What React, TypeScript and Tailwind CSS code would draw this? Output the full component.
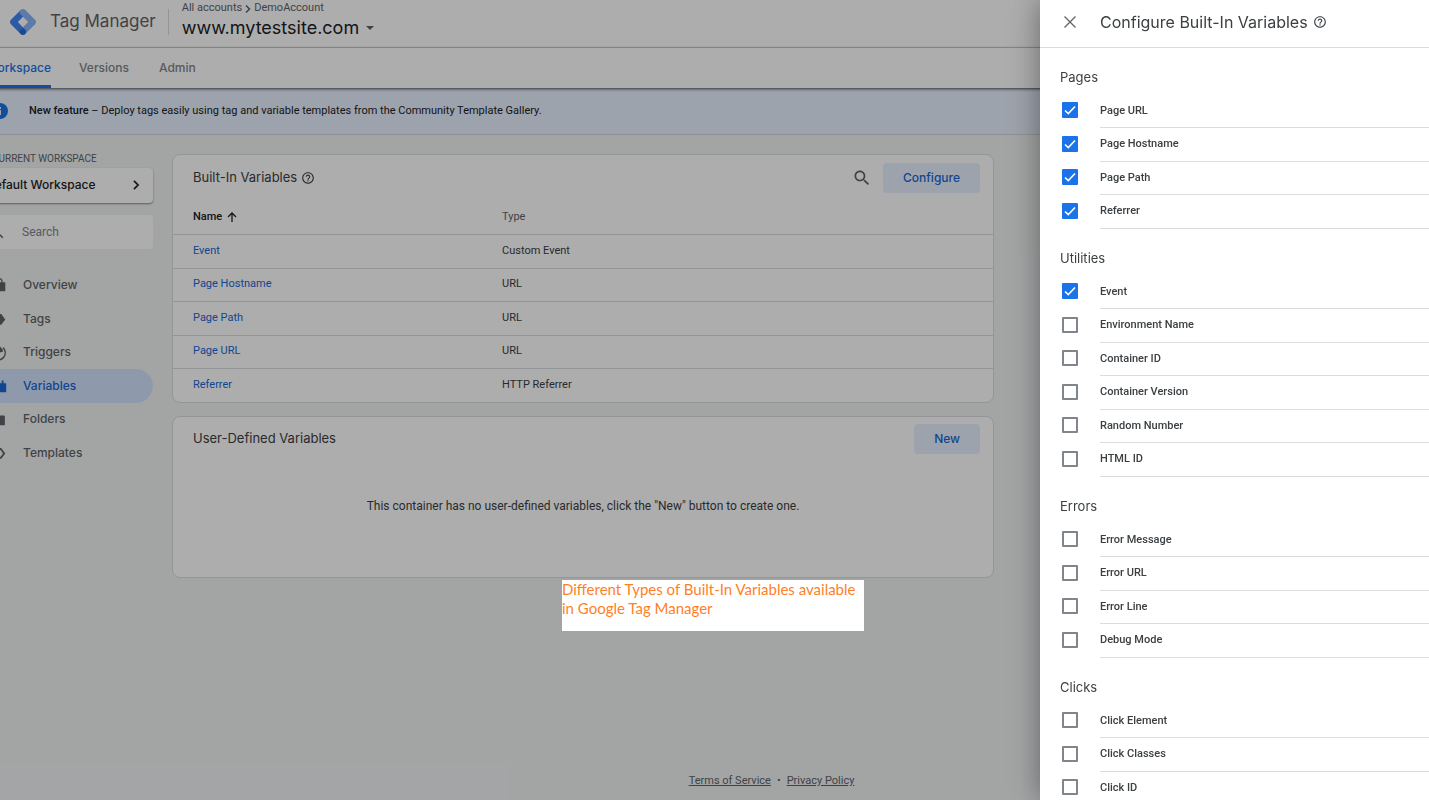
import React from "react";

const SANS = "font-['Inter','Roboto',sans-serif]";

function HelpIcon({ className }: { className?: string }) {
  return (
    <svg viewBox="0 0 24 24" className={className} fill="currentColor" aria-hidden="true">
      <path d="M11 18h2v-2h-2v2zm1-16C6.480 2 2 6.480 2 12s4.480 10 10 10 10-4.480 10-10S17.520 2 12 2zm0 18c-4.410 0-8-3.590-8-8s3.590-8 8-8 8 3.590 8 8-3.590 8-8 8zm0-14c-2.210 0-4 1.790-4 4h2c0-1.100.900-2 2-2s2 .900 2 2c0 2-3 1.750-3 5h2c0-2.250 3-2.500 3-5 0-2.210-1.790-4-4-4z" />
    </svg>
  );
}

function SearchIcon({ className }: { className?: string }) {
  return (
    <svg viewBox="0 0 24 24" className={className} fill="currentColor" aria-hidden="true">
      <path d="M15.500 14h-.790l-.280-.270C15.410 12.590 16 11.110 16 9.500 16 5.910 13.090 3 9.500 3S3 5.910 3 9.500 5.910 16 9.500 16c1.610 0 3.090-.590 4.230-1.570l.270.280v.790l5 4.990L20.490 19l-4.990-5zm-6 0C7.010 14 5 11.990 5 9.500S7.010 5 9.500 5 14 7.010 14 9.500 11.990 14 9.500 14z" />
    </svg>
  );
}

function Logo() {
  return (
    <svg viewBox="0 0 256 256" className="size-[26px] shrink-0" aria-hidden="true">
      <path fill="#8ab4f8" d="M150.262 245.516l-44.437-43.331 95.433-97.454 46.007 45.091z" />
      <path fill="#4285f4" d="M150.450 53.938L106.176 8.731 9.360 104.629c-12.480 12.480-12.480 32.713 0 45.207l95.360 95.986 45.090-42.182-72.654-76.407z" />
      <path fill="#8ab4f8" d="M246.625 105.370L150.625 9.370c-12.494-12.494-32.750-12.494-45.244 0-12.494 12.495-12.494 32.751 0 45.245l96 96c12.494 12.494 32.750 12.494 45.244 0 12.494-12.494 12.494-32.750 0-45.244z" />
      <circle fill="#246fdb" cx="127.265" cy="224.731" r="31.273" />
    </svg>
  );
}

const navItems = [
  { label: "Overview", icon: <path d="M3 7h14v10H3zM6 7V6a4 4 0 0 1 8 0v1h-1.500V6a2.500 2.500 0 0 0-5 0v1z" /> },
  { label: "Tags", icon: <path d="M2 4.500h10.500L17 10.500l-4.500 6H2z" /> },
  { label: "Triggers", icon: <path d="M10 2a9 9 0 1 0 5 2.500l-1 1.300a7 7 0 1 1-4-1.800v7l4.500-1.500A5 5 0 0 0 12 5z" /> },
  { label: "Variables", icon: <path d="M3 7h4V4h2v3h4V4h2v3h3v10H3z" />, active: true },
  { label: "Folders", icon: <path d="M2 6h5l1 0h7.500a1 1 0 0 1 1 1v9a1 1 0 0 1-1 1H2z" /> },
  { label: "Templates", icon: <path d="M5 10.500l5-6h2.500l4.500 6-4.500 6H10l-5-6zm7.500 0l2-.010-3-4-3.500 4 3.500 4 3-4z" fillRule="evenodd" /> },
];

const builtIns = [
  ["Event", "Custom Event"],
  ["Page Hostname", "URL"],
  ["Page Path", "URL"],
  ["Page URL", "URL"],
  ["Referrer", "HTTP Referrer"],
];

const groups = [
  { title: "Pages", items: ["Page URL", "Page Hostname", "Page Path", "Referrer"], on: ["Page URL", "Page Hostname", "Page Path", "Referrer"] },
  { title: "Utilities", items: ["Event", "Environment Name", "Container ID", "Container Version", "Random Number", "HTML ID"], on: ["Event"] },
  { title: "Errors", items: ["Error Message", "Error URL", "Error Line", "Debug Mode"], on: [] as string[] },
  { title: "Clicks", items: ["Click Element", "Click Classes", "Click ID"], on: [] as string[] },
];

function Header() {
  return (
    <header className="flex h-12 shrink-0 items-center border-b border-[#dadce0] bg-white pb-1 pl-[10px]">
      <Logo />
      <span className={`${SANS} ml-[14px] text-[17px] text-[#5f6368]`}>Tag Manager</span>
      <div className="ml-3 h-[26px] w-px bg-[#dadce0]" />
      <div className="mb-[6px] ml-[13px] flex flex-col">
        <div className="flex h-[18px] items-center gap-[3px] text-[11px] text-[#5f6368]">
          <a href="#accounts">All accounts</a>
          <svg viewBox="0 0 6 8" className="h-2 w-[6px]" fill="none" stroke="currentColor" strokeWidth="1.500" aria-hidden="true">
            <path d="M1 .500 4.500 4 1 7.500" />
          </svg>
          <a href="#demo">DemoAccount</a>
        </div>
        <button type="button" className={`${SANS} flex h-5 items-center gap-[7px] text-lg text-[#202124]`}>
          www.mytestsite.com
          <svg viewBox="0 0 8 4" className="h-1 w-2" fill="#5f6368" aria-hidden="true">
            <path d="M0 0h8L4 4z" />
          </svg>
        </button>
      </div>
    </header>
  );
}

function Tabs() {
  return (
    <nav className={`${SANS} relative z-10 flex h-10 shrink-0 items-stretch gap-7 bg-white pl-[6px] text-xs font-medium text-[#80868b] shadow-[0_1px_3px_rgba(0,0,0,0.7)]`}>
      <a href="#workspace" className="flex items-center border-b-[3px] border-[#1a73e8] pt-[2px] text-[#1a73e8]">Workspace</a>
      <a href="#versions" className="flex items-center">Versions</a>
      <a href="#admin" className="ml-[2px] flex items-center">Admin</a>
    </nav>
  );
}

function Banner() {
  return (
    <div className="flex h-[47px] shrink-0 items-center border-b border-[#d2d5da] bg-[#e8f0fe] pl-3 text-[11px] text-[#202124]">
      <svg viewBox="0 0 16 16" className="size-4" aria-hidden="true">
        <circle cx="8" cy="8" r="8" fill="#1a73e8" />
        <path d="M7 7h2v5H7zM7 4h2v2H7z" fill="#e8f0fe" />
      </svg>
      <p className="ml-[21px]">
        <b className="font-medium">New feature</b> – Deploy tags easily using tag and variable templates from the Community Template Gallery.
      </p>
    </div>
  );
}

function Sidebar() {
  return (
    <aside className="w-[173px] shrink-0 pt-4">
      <h2 className="h-4 pl-3 text-[10px] leading-4 text-[#5f6368]">CURRENT WORKSPACE</h2>
      <button type="button" className={`${SANS} mt-px flex h-[35px] w-full items-center justify-between rounded-sm bg-white pr-[13px] pb-px pl-[6px] text-xs font-medium text-[#202124] shadow-[0_1px_2px_rgba(60,64,67,0.6)]`}>
        Default Workspace
        <svg viewBox="0 0 8 12" className="h-[10px] w-2" fill="none" stroke="currentColor" strokeWidth="2" aria-hidden="true">
          <path d="M1.500 1 6.500 6l-5 5" />
        </svg>
      </button>
      <label className="mt-3 flex h-[34px] items-center rounded-sm bg-white pl-2 text-[#5f6368]">
        <SearchIcon className="size-[18px] shrink-0" />
        <input type="text" placeholder="Search" aria-label="Search" className="ml-4 w-24 bg-transparent text-xs text-[#202124] outline-none placeholder:text-[#80868b]" />
      </label>
      <ul className={`${SANS} mt-5 text-xs font-medium`}>
        {navItems.map((item) => (
          <li key={item.label} className="h-[33px] even:h-[34px]">
            <a
              href={`#${item.label.toLowerCase()}`}
              className={`flex h-full items-center gap-[15px] rounded-r-full pb-px pl-[10px] ${item.active ? "bg-[#d2e3fc] text-[#1967d2]" : "text-[#5f6368]"}`}
            >
              <svg viewBox="0 0 20 20" className="size-[18px]" fill="currentColor" aria-hidden="true">{item.icon}</svg>
              {item.label}
            </a>
          </li>
        ))}
      </ul>
    </aside>
  );
}

const tonal = `${SANS} rounded-sm bg-[#e8f0fe] px-5 text-xs font-medium text-[#1967d2]`;

function Content() {
  return (
    <main className="flex grow flex-col gap-[13px] pt-[19px] pl-[19px]">
      <section className="max-w-[822px] rounded-lg border border-[#dadce0] bg-white">
        <div className="flex h-[46px] items-center pr-[13px] pl-5">
          <h2 className={`${SANS} text-[13px] text-[#3c4043]`}>Built-In Variables</h2>
          <button type="button" aria-label="Help" className="ml-1 text-[#3c4043]"><HelpIcon className="size-[14px]" /></button>
          <button type="button" aria-label="Search variables" className="mr-[11px] ml-auto text-[#5f6368]"><SearchIcon className="size-5" /></button>
          <button type="button" className={`${tonal} h-[30px]`}>Configure</button>
        </div>
        <table className="w-full table-fixed text-left text-[11px]">
          <thead>
            <tr className="h-[33px]">
              <th className="w-[309px] pl-5 font-medium text-[#202124]">
                <span className="flex items-center gap-[5px]">
                  Name
                  <svg viewBox="0 0 10 10" className="size-[10px]" fill="none" stroke="currentColor" strokeWidth="1.300" aria-hidden="true">
                    <path d="M5 10V1M1 5l4-4 4 4" />
                  </svg>
                </span>
              </th>
              <th className="pl-5 font-normal text-[#5f6368]">Type</th>
            </tr>
          </thead>
          <tbody>
            {builtIns.map(([name, type]) => (
              <tr key={name} className="h-[34px] border-t border-[#dadce0] even:h-[33px]">
                <td className="pl-5"><a href="#variable" className="text-[#1967d2]">{name}</a></td>
                <td className="pl-5 text-[#3c4043]">{type}</td>
              </tr>
            ))}
          </tbody>
        </table>
      </section>
      <section className="h-[162px] max-w-[822px] rounded-lg border border-[#dadce0] bg-white">
        <div className="flex h-[44px] items-center justify-between pr-[13px] pl-5">
          <h2 className={`${SANS} text-[13px] text-[#3c4043]`}>User-Defined Variables</h2>
          <button type="button" className={`${tonal} h-[30px]`}>New</button>
        </div>
        <p className="pt-[37px] text-center text-xs text-[#3c4043]">
          This container has no user-defined variables, click the "New" button to create one.
        </p>
      </section>
      <footer className="mt-auto flex justify-center gap-[6px] pr-[58px] pb-[11px] text-[11px] leading-4 text-[#5f6368]">
        <a href="#terms" className="underline">Terms of Service</a>
        <span>•</span>
        <a href="#privacy" className="underline">Privacy Policy</a>
      </footer>
    </main>
  );
}

function Drawer() {
  return (
    <aside className="fixed inset-y-0 right-0 z-30 w-[389px] overflow-hidden bg-white shadow-[0_0_28px_rgba(0,0,0,0.4)]">
      <div className="flex h-12 items-center border-b border-[#dadce0] pb-1 pl-6">
        <button type="button" aria-label="Close" className="text-[#5f6368]">
          <svg viewBox="0 0 12 12" className="size-3" fill="none" stroke="currentColor" strokeWidth="1.300" aria-hidden="true">
            <path d="M.500.500l11 11M11.500.500l-11 11" />
          </svg>
        </button>
        <h1 className={`${SANS} ml-6 text-base text-[#3c4043]`}>Configure Built-In Variables</h1>
        <button type="button" aria-label="Help" className="ml-[5px] text-[#3c4043]"><HelpIcon className="size-[14px]" /></button>
      </div>
      <div className="flex flex-col gap-[19px] pt-[19px] pl-5">
        {groups.map((group) => (
          <section key={group.title}>
            <h2 className={`${SANS} h-7 text-[13px] leading-5 text-[#3c4043]`}>{group.title}</h2>
            <ul>
              {group.items.map((item) => (
                <li key={item} className="h-[33px] even:h-[34px]">
                  <label className="flex h-full items-center text-[11px] font-medium text-[#3c4043]">
                    <span className="mb-[3px] grid w-10 shrink-0 pl-[2px]">
                      <input
                        type="checkbox"
                        defaultChecked={group.on.includes(item)}
                        className="peer col-start-1 row-start-1 size-4 appearance-none rounded-[1px] border-2 border-[#80868b] checked:border-[#1a73e8] checked:bg-[#1a73e8]"
                      />
                      <svg viewBox="0 0 16 16" className="pointer-events-none col-start-1 row-start-1 hidden size-4 peer-checked:block" fill="none" stroke="#fff" strokeWidth="1.600" aria-hidden="true">
                        <path d="M3 8.500 6.300 11.600 13 4.500" />
                      </svg>
                    </span>
                    <span className="flex h-full grow items-center border-b border-[#dadce0]">{item}</span>
                  </label>
                </li>
              ))}
            </ul>
          </section>
        ))}
      </div>
    </aside>
  );
}

export default function App() {
  return (
    <div className="relative flex min-h-screen flex-col overflow-hidden bg-[#f1f3f4] font-['Roboto',sans-serif]">
      <Header />
      <div className="-ml-5 flex grow flex-col">
        <Tabs />
        <Banner />
        <div className="flex grow">
          <Sidebar />
          <Content />
        </div>
      </div>
      <div className="absolute inset-0 z-20 bg-black/32" />
      <p className="absolute top-[580px] left-[562px] z-20 h-[51px] w-[302px] bg-white font-['Lato',sans-serif] text-[15px] leading-[19px] text-[#ff7f27]">
        Different Types of Built-In Variables available in Google Tag Manager
      </p>
      <Drawer />
    </div>
  );
}
